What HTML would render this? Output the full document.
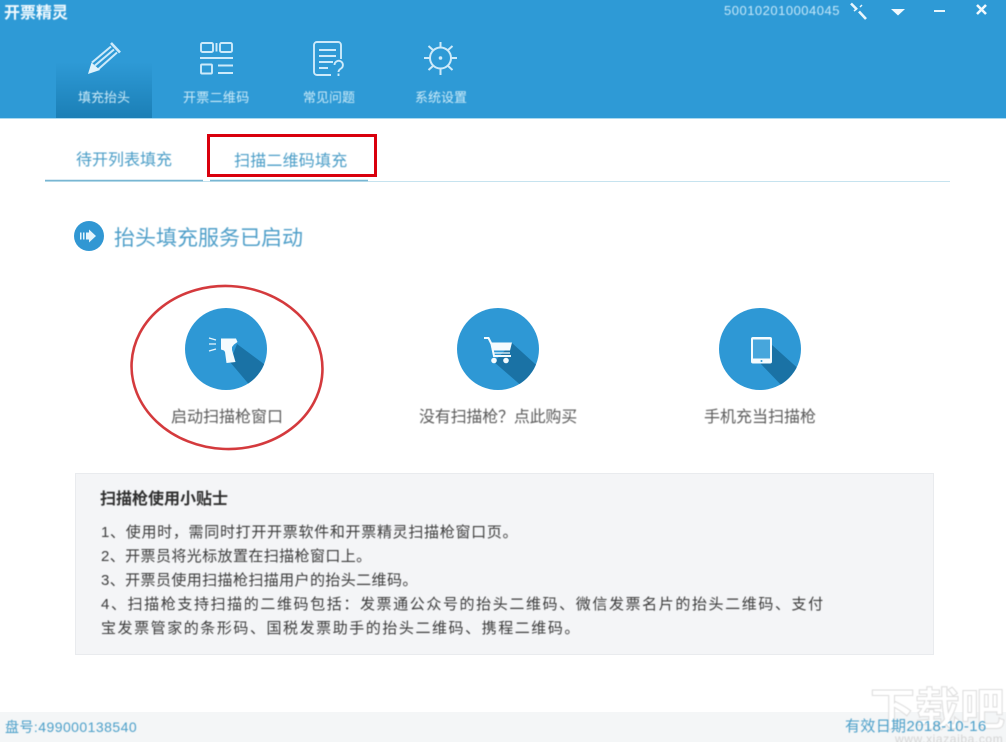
<!DOCTYPE html>
<html lang="zh-CN"><head><meta charset="utf-8"><title>开票精灵</title>
<style>
html,body{margin:0;padding:0;background:#fff}
#p{position:relative;width:1006px;height:742px;overflow:hidden;background:#fff;font-family:"Liberation Sans","Noto Sans CJK SC",sans-serif}
.t{position:absolute;white-space:nowrap;line-height:1;filter:blur(.5px)}
.a{position:absolute}
svg{position:absolute;left:0;top:0}
.nav{color:#cdebf8;font-size:13px;top:91px}
.lb{color:#5c5c5c;font-size:16px;top:410px}
.ln{color:#3c3c3c;font-size:15px;left:101px}
.tc{font-family:"Liberation Sans","Noto Sans CJK TC",sans-serif}
</style></head><body><div id="p">
<div class="a" style="left:0;top:0;width:1006px;height:118px;background:#2e9ad6"></div>
<div class="a" style="left:56px;top:62px;width:96px;height:56px;background:linear-gradient(#2e9ad6,#1b7fb6)"></div>
<div class="a" style="left:0;top:118px;width:1006px;height:1px;background:#a9d9f0"></div>

<div class="t" style="left:4px;top:6px;font-size:16px;font-weight:700;color:#f2fafe">开票精灵</div>
<div class="t" style="left:724px;top:4px;font-size:13px;letter-spacing:.5px;color:#c6e8f9">500102010004045</div>

<div class="t nav" style="left:78px">填充抬头</div>
<div class="t nav" style="left:183px;letter-spacing:.3px">开票二维码</div>
<div class="t nav" style="left:303px">常见问题</div>
<div class="t nav" style="left:415px">系统设置</div>

<svg width="1006" height="742" viewBox="0 0 1006 742" fill="none">
<defs>
<clipPath id="c1"><circle cx="226" cy="349" r="41"/></clipPath>
<clipPath id="c2"><circle cx="498" cy="349" r="41"/></clipPath>
<clipPath id="c3"><circle cx="760" cy="349" r="41"/></clipPath>
</defs>
<!-- window controls -->
<g stroke="#e8f6fd" stroke-width="2.600">
<path d="M851 3.500l6 6"/><path d="M859 11.500l7 7.500"/>
<path d="M854 11l3-2.500M860 7l2-2" stroke-width="1.500"/>
</g>
<path d="M891 9h14l-7 6.500z" fill="#f0f9fe"/>
<path d="M934 11h11" stroke="#e6f5fc" stroke-width="2"/>
<path d="M977 5l9 9M986 5l-9 9" stroke="#f0f9fe" stroke-width="2.600"/>

<!-- pencil -->
<g stroke="#cdeafa" stroke-width="2">
<path d="M92 62.500L111 46.500M95 65.500L114 49.500M98.500 69L117 52.500"/>
<path d="M111 43L120 52.500" stroke-width="2.600"/>
</g>
<path d="M88 74l3.500-11.500 8.500 7.500z" fill="#dff3fc"/>
<!-- qr -->
<g stroke="#cdeafa" stroke-width="1.900">
<rect x="201" y="43" width="12" height="9" rx="1.500"/>
<rect x="220" y="43" width="12" height="9" rx="1.500"/>
<path d="M216.500 43v8.500M200 58h33"/>
<rect x="201" y="64.500" width="11" height="9" rx="1"/>
<path d="M218 65.500h15M218 73h15"/>
</g>
<!-- doc -->
<g stroke="#cdeafa" stroke-width="1.900">
<path d="M331 75h-14a3 3 0 0 1-3-3V45a3 3 0 0 1 3-3h21a3 3 0 0 1 3 3v14"/>
<path d="M319 50h17M319 56h17M319 62h14M319 68h9"/>
<path d="M334.500 65a4.200 4.200 0 1 1 6.500 3.500c-1.500 1-2.500 1.800-2.500 3.500" />
<path d="M338.500 73.500v2.500"/>
</g>
<!-- gear -->
<g stroke="#cdeafa" stroke-width="2">
<circle cx="440.500" cy="58" r="10.500"/>
<path d="M440.500 42v5M440.500 69v6M424 58h6M451 58h6M428.500 46l5 4.500M452.500 46l-5 4.500M428.500 70l5-4.500M452.500 70l-5-4.500"/>
</g>
<circle cx="440.500" cy="58" r="1.800" fill="#cdeafa"/>

<!-- tabs line -->
<path d="M45 181.500H950" stroke="#c6e3ef" stroke-width="1"/>
<path d="M45 180.500H203M210 180.500H368" stroke="#79b6d2" stroke-width="1.500"/>
<rect x="208.500" y="135.500" width="167" height="40" stroke="#d9000d" stroke-width="3"/>

<!-- header arrow circle -->
<circle cx="89" cy="236" r="15" fill="#3197d3"/>
<path d="M80 232.500h1.500v7H80zM83 232.500h1.500v7H83zM86 232.500h3v-3l7 6.500-7 6.500v-3h-3z" fill="#e4f4fc"/>

<!-- circles -->
<circle cx="226" cy="349" r="41" fill="#2e98d5"/>
<g clip-path="url(#c1)"><path d="M237 344L272 370 252 388 230 362z" fill="#1a72a5"/></g>
<path d="M221 338.500h15l1.500 3.500-3.500 2.500-2 2.500 0 3 3.500 12-9 1-1.500-11-1-1.500-3-1z" fill="#f4fbfe"/>
<path d="M209 338l7 2M209 344h7M209 351l7-2" stroke="#e8f6fd" stroke-width="1.300"/>

<circle cx="498" cy="349" r="41" fill="#2e98d5"/>
<g clip-path="url(#c2)"><path d="M512 343L544 372 524 388 494 362z" fill="#1a72a5"/></g>
<path d="M484 338h4.500l3 6 2.500 12h17" stroke="#f4fbfe" stroke-width="2"/>
<path d="M490.500 342.500h21.500l-2 8h-18z" fill="#f4fbfe"/>
<path d="M493 353h17" stroke="#f4fbfe" stroke-width="1.200"/>
<circle cx="494" cy="360.500" r="2.800" fill="#f4fbfe"/><circle cx="506" cy="360.500" r="2.800" fill="#f4fbfe"/>

<circle cx="760" cy="349" r="41" fill="#2e98d5"/>
<g clip-path="url(#c3)"><path d="M772 345L802 372 784 388 760 363z" fill="#1a72a5"/></g>
<rect x="751" y="337" width="21" height="26.500" rx="2" fill="#f4fbfe"/>
<rect x="753" y="339.500" width="17" height="19" fill="#47a6dc"/>
<circle cx="761.500" cy="361" r="1" fill="#2e98d5"/>

<!-- red ellipse -->
<ellipse cx="227" cy="367.500" rx="95.500" ry="81.500" transform="rotate(3 227 367.500)" stroke="#d43a3d" stroke-width="2.600"/>
</svg>

<div class="t" style="left:76px;top:153px;font-size:16px;color:#4a9dc7">待开列表填充</div>
<div class="t" style="left:234px;top:154px;font-size:16px;letter-spacing:.2px;color:#4a9dc7">扫描二维码填充</div>
<div class="t" style="left:114px;top:228px;font-size:21px;color:#4f9fc9">抬头填充服务已启动</div>

<div class="t lb" style="left:171px">启动扫描枪窗口</div>
<div class="t lb" style="left:419px;letter-spacing:-.2px">没有扫描枪<span class="tc">？</span>点此购买</div>
<div class="t lb" style="left:704px">手机充当扫描枪</div>

<div class="a" style="left:75px;top:473px;width:857px;height:180px;background:#f4f5f7;border:1px solid #e9ebee"></div>
<div class="t" style="left:100px;top:492px;font-size:16px;font-weight:700;color:#2e2e2e">扫描枪使用小贴士</div>
<div class="t ln" style="top:525px;letter-spacing:.7px">1、使用时<span class="tc">，</span>需同时打开开票软件和开票精灵扫描枪窗口页。</div>
<div class="t ln" style="top:549px;letter-spacing:.4px">2、开票员将光标放置在扫描枪窗口上。</div>
<div class="t ln" style="top:573px;letter-spacing:.4px">3、开票员使用扫描枪扫描用户的抬头二维码。</div>
<div class="t ln" style="top:597px;letter-spacing:1.6px">4、扫描枪支持扫描的二维码包括<span class="tc">：</span>发票通公众号的抬头二维码、微信发票名片的抬头二维码、支付</div>
<div class="t ln" style="top:621px;left:101px;letter-spacing:1.55px">宝发票管家的条形码、国税发票助手的抬头二维码、携程二维码。</div>

<div class="a" style="left:0;top:712px;width:1006px;height:30px;background:#f4f6f7"></div>
<div class="t" style="left:870px;top:687px;font-size:45px;font-weight:700;color:#fff;-webkit-text-stroke:1px #dcdcdc">下载吧</div>
<div class="t" style="left:895px;top:733px;font-size:12px;color:#d4d4d4;letter-spacing:.6px">www.xiazaiba.com</div>
<div class="t" style="left:5px;top:720px;font-size:14px;letter-spacing:.45px;color:#4b9fc9">盘号:499000138540</div>
<div class="t" style="left:845px;top:719px;font-size:15px;letter-spacing:.35px;color:#4b9fc9">有效日期2018-10-16</div>
</div></body></html>
